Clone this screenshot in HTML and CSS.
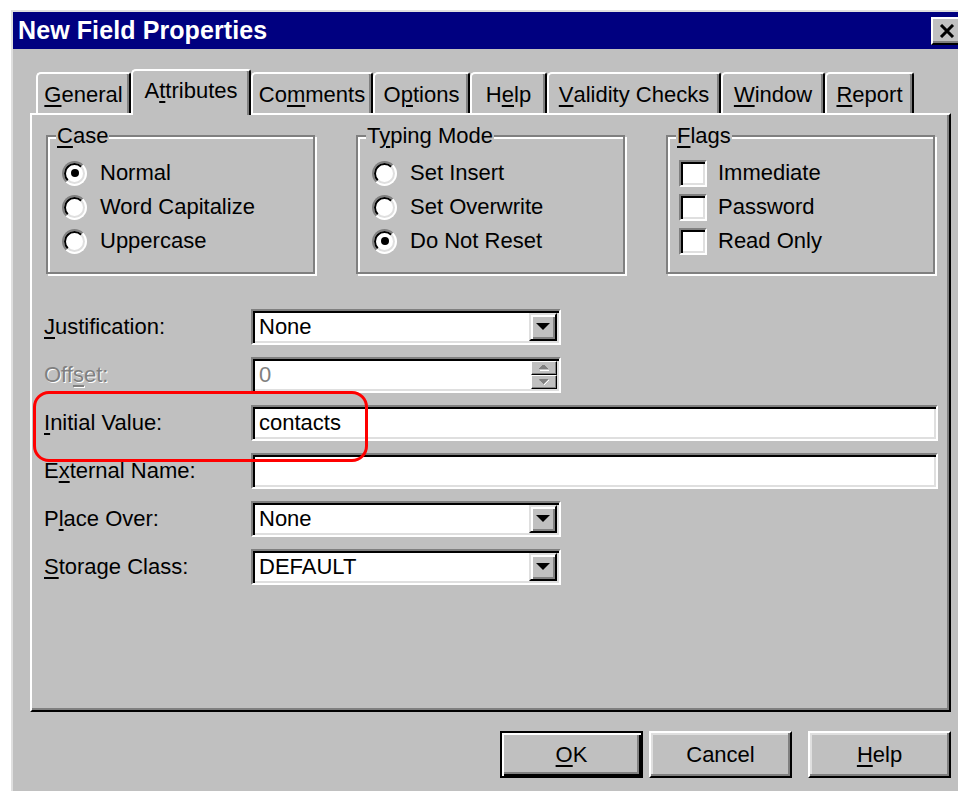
FILE: index.html
```html
<!DOCTYPE html>
<html lang="en">
<head>
<meta charset="utf-8">
<title>New Field Properties</title>
<link rel="stylesheet" href="styles.css">
</head>
<body>
<div class="dialog">
  <div class="titlebar">
    <span class="title">New Field Properties</span>
    <span class="close-btn">
      <svg width="16" height="14" viewBox="0 0 16 14"><path d="M2 1 L14 13 M14 1 L2 13" stroke="#000" stroke-width="3" fill="none"/></svg>
    </span>
  </div>

  <div class="tabs">
    <div class="tab tab-general"><u>G</u>eneral</div>
    <div class="tab tab-attributes active">A<u>t</u>tributes</div>
    <div class="tab tab-comments">Co<u>m</u>ments</div>
    <div class="tab tab-options">O<u>p</u>tions</div>
    <div class="tab tab-help">H<u>e</u>lp</div>
    <div class="tab tab-validity"><u>V</u>alidity Checks</div>
    <div class="tab tab-window"><u>W</u>indow</div>
    <div class="tab tab-report"><u>R</u>eport</div>
  </div>

  <div class="panel">
    <div class="groups">
      <fieldset class="group">
        <legend><u>C</u>ase</legend>
        <div class="option"><span class="radio checked"></span>Normal</div>
        <div class="option"><span class="radio"></span>Word Capitalize</div>
        <div class="option"><span class="radio"></span>Uppercase</div>
      </fieldset>
      <fieldset class="group">
        <legend>T<u>y</u>ping Mode</legend>
        <div class="option"><span class="radio"></span>Set Insert</div>
        <div class="option"><span class="radio"></span>Set Overwrite</div>
        <div class="option"><span class="radio checked"></span>Do Not Reset</div>
      </fieldset>
      <fieldset class="group">
        <legend><u>F</u>lags</legend>
        <div class="option option-check"><span class="checkbox"></span>Immediate</div>
        <div class="option option-check"><span class="checkbox"></span>Password</div>
        <div class="option option-check"><span class="checkbox"></span>Read Only</div>
      </fieldset>
    </div>

    <div class="form">
      <label class="field-label"><u>J</u>ustification:</label>
      <div class="field field-short">
        <span class="field-text">None</span>
        <span class="drop-btn"><span class="arrow-down"></span></span>
      </div>

      <label class="field-label disabled">Off<u>s</u>et:</label>
      <div class="field field-short">
        <span class="field-text disabled-text">0</span>
        <span class="spin">
          <span class="spin-btn"><svg width="10" height="6" viewBox="0 0 10 6"><path d="M5 0h1v1h1v1h1v1h1v1h-9v-1h1v-1h1v-1h1v-1z" fill="#808080"/><path d="M1 5h9v1h-9z" fill="#fff"/></svg></span>
          <span class="spin-btn"><svg width="10" height="6" viewBox="0 0 10 6"><path d="M0 0h9v1h-1v1h-1v1h-1v1h-1v1h-1v-1h-1v-1h-1v-1h-1z" fill="#808080"/><path d="M5 5h1v1h-1z M6 4h1v1h-1z M7 3h1v1h-1z M8 2h1v1h-1z M9 1h1v1h-1z" fill="#fff"/></svg></span>
        </span>
      </div>

      <label class="field-label"><u>I</u>nitial Value:</label>
      <div class="field field-long"><span class="field-text">contacts</span></div>

      <label class="field-label">E<u>x</u>ternal Name:</label>
      <div class="field field-long"><span class="field-text"></span></div>

      <label class="field-label">P<u>l</u>ace Over:</label>
      <div class="field field-short">
        <span class="field-text">None</span>
        <span class="drop-btn"><span class="arrow-down"></span></span>
      </div>

      <label class="field-label"><u>S</u>torage Class:</label>
      <div class="field field-short">
        <span class="field-text">DEFAULT</span>
        <span class="drop-btn"><span class="arrow-down"></span></span>
      </div>
    </div>

    <div class="callout"></div>
  </div>

  <div class="buttons">
    <div class="btn btn-default"><u>O</u>K</div>
    <div class="btn btn-cancel">Cancel</div>
    <div class="btn btn-help"><u>H</u>elp</div>
  </div>
</div>
</body>
</html>
```

FILE: styles.css
```css
html, body {
  margin: 0;
  padding: 0;
  background: #fff;
  overflow: hidden;
  width: 958px;
  height: 791px;
}

body {
  font-family: "Liberation Sans", Arial, sans-serif;
  font-size: 22px;
  color: #000;
}

u {
  text-decoration: underline;
  text-decoration-thickness: 2px;
  text-underline-offset: 3px;
}

/* ---------- window frame ---------- */
.dialog {
  margin: 10px 0 0 11px;
  width: 960px;
  height: 781px;
  box-sizing: border-box;
  background: #c0c0c0;
  border-top: 2px solid #dfdfdf;
  border-left: 2px solid #dfdfdf;
}

.titlebar {
  height: 37px;
  background: #000080;
  display: flex;
  align-items: center;
  padding-left: 5px;
}

.title {
  color: #fff;
  font-weight: bold;
  font-size: 25px;
  letter-spacing: 0.1px;
}

.close-btn {
  margin-left: auto;
  margin-right: 8px;
  width: 32px;
  height: 28px;
  box-sizing: border-box;
  background: #c0c0c0;
  border: 2px solid;
  border-color: #fff #000 #000 #fff;
  box-shadow: inset -2px -2px 0 #808080;
  display: flex;
  align-items: center;
  justify-content: center;
}

/* ---------- tab strip ---------- */
.tabs {
  display: flex;
  align-items: flex-end;
  height: 64px;
  margin-left: 23px;
}

.tab {
  height: 41px;
  box-sizing: border-box;
  border-top: 2px solid #fff;
  border-left: 2px solid #fff;
  border-right: 2px solid #000;
  border-radius: 5px 3px 0 0;
  box-shadow: inset -2px 0 0 #808080;
  display: flex;
  align-items: center;
  justify-content: center;
  padding-top: 2px;
  white-space: nowrap;
}

.tab.active {
  position: relative;
  z-index: 1;
  height: 46px;
  margin-bottom: -2px;
  background: #c0c0c0;
  padding-top: 0;
  padding-bottom: 4px;
}

.tab-general { width: 95px; }
.tab-attributes { width: 120px; }
.tab-comments { width: 122px; }
.tab-options { width: 97px; }
.tab-help { width: 77px; }
.tab-validity { width: 174px; }
.tab-window { width: 104px; }
.tab-report { width: 89px; }

/* ---------- tab page ---------- */
.panel {
  position: relative;
  margin-left: 17px;
  width: 921px;
  height: 599px;
  box-sizing: border-box;
  border: 2px solid;
  border-color: #fff #000 #000 #fff;
  box-shadow: inset -2px -2px 0 #808080;
  padding: 9px 0 0 14px;
}

.groups {
  display: grid;
  grid-template-columns: 269px 269px 269px;
  column-gap: 41px;
}

.group {
  margin: 0;
  height: 150px;
  box-sizing: border-box;
  border: 2px solid #808080;
  box-shadow: inset 2px 2px 0 #fff, 2px 2px 0 #fff;
  padding: 8px 0 0 8px;
}

.group legend {
  padding: 0 1px;
  line-height: 24px;
  background: #c0c0c0;
}

.option {
  height: 34px;
  display: flex;
  align-items: center;
  padding-left: 6px;
}

.option-check {
  padding-left: 3px;
}

/* sunken round option button */
.radio {
  position: relative;
  width: 25px;
  height: 25px;
  box-sizing: border-box;
  border-radius: 50%;
  background: #fff;
  border: 2px solid;
  border-color: #808080 #fff #fff #808080;
  margin-right: 13px;
  flex: none;
}

.radio::before {
  content: "";
  position: absolute;
  inset: 0;
  border-radius: 50%;
  border: 2px solid;
  border-color: #000 #dfdfdf #dfdfdf #000;
}

.radio.checked::after {
  content: "";
  position: absolute;
  left: 50%;
  top: 50%;
  width: 8px;
  height: 8px;
  margin: -4px 0 0 -4px;
  border-radius: 50%;
  background: #000;
}

/* sunken check box */
.checkbox {
  width: 28px;
  height: 27px;
  box-sizing: border-box;
  background: #fff;
  border: 2px solid;
  border-color: #808080 #fff #fff #808080;
  box-shadow: inset 2px 2px 0 #000, inset -2px -2px 0 #dfdfdf;
  margin-right: 11px;
  flex: none;
}

/* ---------- field rows ---------- */
.form {
  display: grid;
  grid-template-columns: 207px auto;
  grid-auto-rows: 35px;
  row-gap: 13px;
  margin: 35px 0 0 -2px;
  align-items: center;
  justify-items: start;
}

.field-label {
  white-space: nowrap;
}

.field-label.disabled,
.disabled-text {
  color: #808080;
  text-shadow: 1px 1px 0 #fff;
}

.field {
  height: 36px;
  box-sizing: border-box;
  background: #fff;
  border: 2px solid;
  border-color: #808080 #fff #fff #808080;
  box-shadow: inset 2px 2px 0 #000, inset -2px -2px 0 #dfdfdf;
  padding: 2px 2px 2px 6px;
  display: flex;
  align-items: center;
}

.field-short { width: 310px; }
.field-long { width: 687px; }

.field-text {
  flex: 1;
  white-space: nowrap;
}

.drop-btn {
  width: 28px;
  height: 28px;
  box-sizing: border-box;
  background: #c0c0c0;
  border: 2px solid;
  border-color: #dfdfdf #000 #000 #dfdfdf;
  box-shadow: inset 2px 2px 0 #fff, inset -2px -2px 0 #808080;
  display: flex;
  align-items: center;
  justify-content: center;
}

.arrow-down {
  width: 0;
  height: 0;
  border-left: 7px solid transparent;
  border-right: 7px solid transparent;
  border-top: 7px solid #000;
}

.spin {
  display: flex;
  flex-direction: column;
  width: 26px;
  height: 28px;
}

.spin-btn {
  height: 14px;
  box-sizing: border-box;
  background: #c0c0c0;
  border: 1px solid;
  border-color: #fff #000 #000 #fff;
  box-shadow: inset -1px -1px 0 #808080;
  display: flex;
  align-items: center;
  justify-content: center;
}

/* red highlight drawn over the form */
.callout {
  position: absolute;
  left: 1px;
  top: 276px;
  width: 335px;
  height: 71px;
  box-sizing: border-box;
  border: 3px solid #f00;
  border-radius: 16px;
}

/* ---------- command buttons ---------- */
.buttons {
  display: flex;
  margin-top: 19px;
  padding-left: 487px;
}

.btn {
  height: 47px;
  width: 143px;
  box-sizing: border-box;
  display: flex;
  align-items: center;
  justify-content: center;
  border: 2px solid;
  border-color: #fff #000 #000 #fff;
  box-shadow: inset -2px -2px 0 #808080, inset 2px 2px 0 #dfdfdf;
}

.btn-default {
  border-color: #000;
  box-shadow: inset 2px 2px 0 #fff, inset -2px -2px 0 #000, inset -4px -4px 0 #808080;
}

.btn-cancel { margin-left: 6px; }
.btn-help { margin-left: 16px; }
```
